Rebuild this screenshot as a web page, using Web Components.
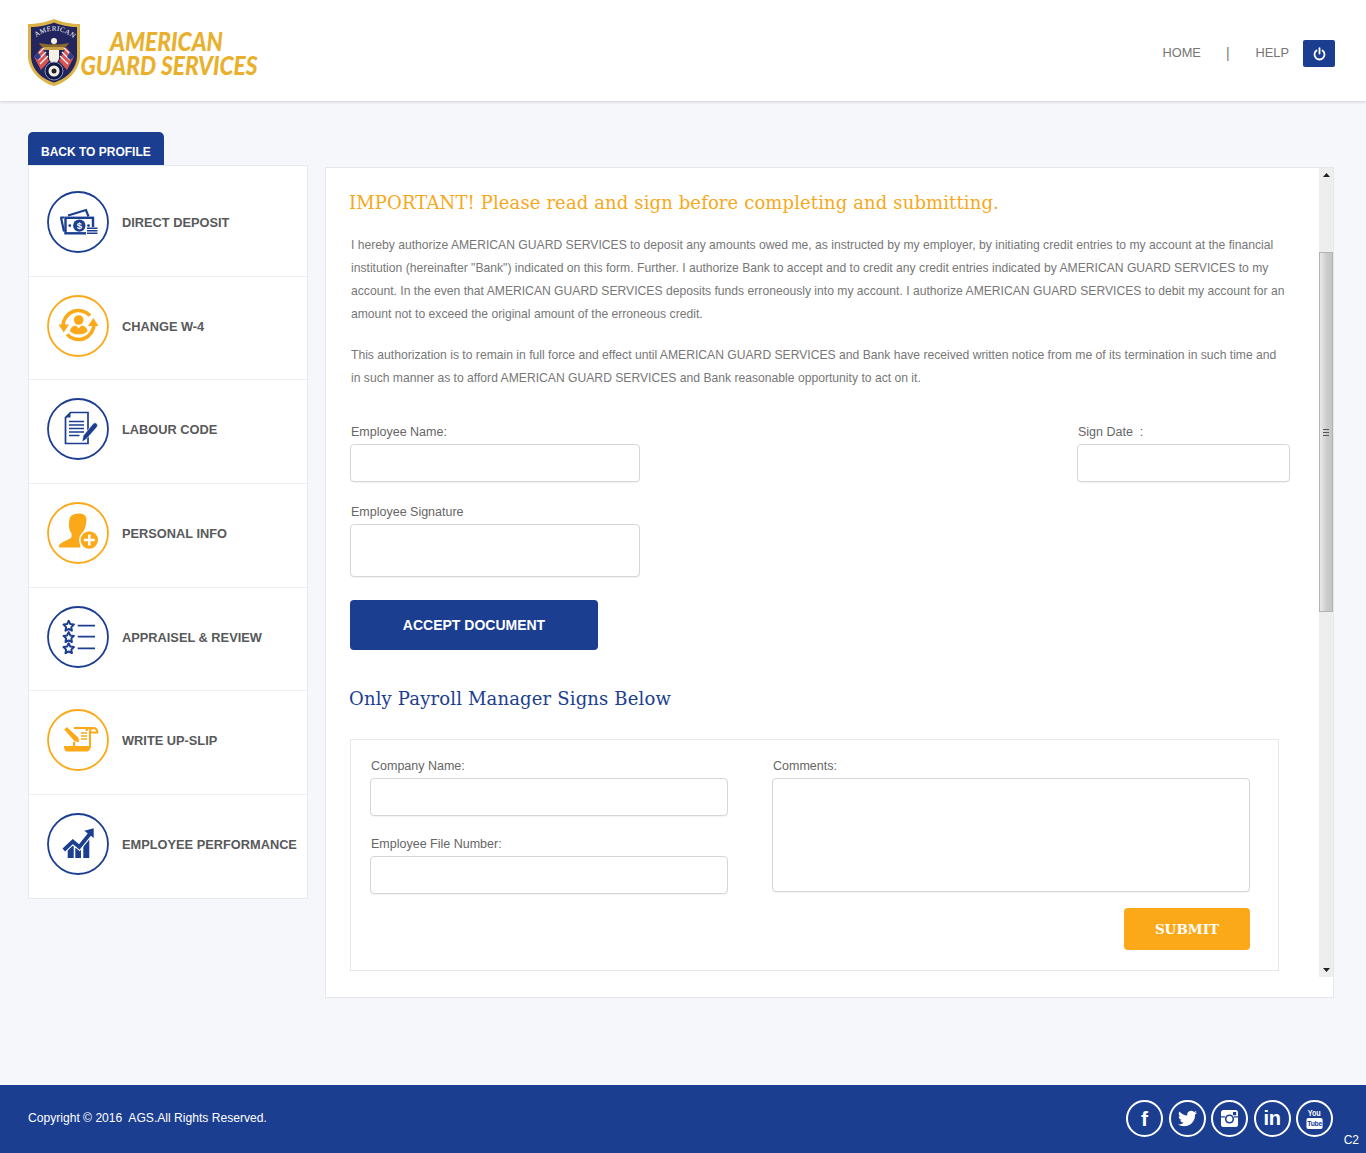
<!DOCTYPE html>
<html>
<head>
<meta charset="utf-8">
<title>American Guard Services</title>
<style>
  html, body { margin: 0; padding: 0; background: #f6f7fa; font-family: "Liberation Sans", Arial, sans-serif; }
</style>
</head>
<body>
<ags-app>
  <ags-header slot="header"></ags-header>

  <ags-tab slot="tab">BACK TO PROFILE</ags-tab>

  <ags-sidebar slot="side">
    <ags-nav-item label="DIRECT DEPOSIT" tone="blue">
      <svg viewBox="0 0 62 62" fill="none">
        <path d="M21 24.500l18-5.500 2.500 6.500" stroke="#1b3e91" stroke-width="2.200"/>
        <path d="M13.300 26.500h4M14 26.500l3 14" stroke="#1b3e91" stroke-width="2.200"/>
        <rect x="18.500" y="26.800" width="27.500" height="15.500" stroke="#1b3e91" stroke-width="2.400" fill="#fff"/>
        <circle cx="32.300" cy="34.600" r="6.200" fill="#1b3e91"/>
        <text x="32.300" y="38" font-family="Liberation Sans" font-weight="700" font-size="9.500" text-anchor="middle" fill="#fff">$</text>
        <circle cx="22.800" cy="34.600" r="1.400" fill="#1b3e91"/>
        <circle cx="41.500" cy="34.600" r="1.400" fill="#1b3e91"/>
        <rect x="39" y="36" width="12" height="8" fill="#fff"/>
        <path d="M40 37.300h10.500M40 39.800h10.500M40 42.300h10.500" stroke="#1b3e91" stroke-width="1.400"/>
      </svg>
    </ags-nav-item>
    <ags-nav-item label="CHANGE W-4" tone="orange">
      <svg viewBox="0 0 62 62" fill="none">
        <path d="M16 31a15.500 15.500 0 0 1 27-10.400" stroke="#fba919" stroke-width="3.600"/>
        <path d="M47 29a15.500 15.500 0 0 1-27 10.400" stroke="#fba919" stroke-width="3.600"/>
        <path d="M11.500 29.500h10.500l-5.200 8z" fill="#fba919"/>
        <path d="M41 31h10.500l-5.200-8z" fill="#fba919"/>
        <circle cx="31.700" cy="25" r="4.800" fill="#fba919"/>
        <path d="M23 36.500c0-4 3-5.500 6-6l2.700 3 2.700-3c3 .5 6 2 6 6-2.500 2-5 2.800-8.700 2.800S25.500 38.500 23 36.500z" fill="#fba919"/>
      </svg>
    </ags-nav-item>
    <ags-nav-item label="LABOUR CODE" tone="blue">
      <svg viewBox="0 0 62 62" fill="none">
        <path d="M23.500 14.500h17.500v31H18.500V19.500z" stroke="#1b3e91" stroke-width="1.700" fill="#fff"/>
        <path d="M23.500 14.500v5h-5z" fill="#1b3e91"/>
        <path d="M22 23.500h15M22 27h15M22 30.500h15M22 34h15M22 37.500h10.500" stroke="#1b3e91" stroke-width="1.700"/>
        <path d="M35 44l1.300-6.500 10-12c2-2 5.500 1 3.700 3.500L39.500 41z" fill="#1b3e91" stroke="#fff" stroke-width=".6"/>
      </svg>
    </ags-nav-item>
    <ags-nav-item label="PERSONAL INFO" tone="orange">
      <svg viewBox="0 0 62 62" fill="none">
        <path d="M24 14c3-3 11-3.500 14-.5 2 2 1.500 5.500 1 8.500-.6 3.500-2 7-3.500 9-.3 1.500 0 3 1.500 4-3 2.500-4.500 6.500-3.500 10.500H13.500c-2 0-2-2-1-3 2.500-2.500 8.500-4.500 11.500-6.500.8-1.500.8-3.200.4-4.800C22.500 29 21.500 25 22 21c.2-2.800.6-5.400 2-7z" fill="#fba919"/>
        <circle cx="42.300" cy="38" r="9.500" fill="#fba919" stroke="#fff" stroke-width="1.600"/>
        <path d="M42.300 32.500v11M36.800 38h11" stroke="#fff" stroke-width="2.600"/>
      </svg>
    </ags-nav-item>
    <ags-nav-item label="APPRAISEL &amp; REVIEW" tone="blue">
      <svg viewBox="0 0 62 62" fill="none">
        <path d="M21.700 14.800l1.600 3.300 3.600.5-2.600 2.500.6 3.600-3.200-1.700-3.200 1.700.6-3.600-2.600-2.500 3.600-.5z" stroke="#1b3e91" stroke-width="2" stroke-linejoin="round"/>
        <path transform="translate(0 11.300)" d="M21.700 14.800l1.600 3.300 3.600.5-2.600 2.500.6 3.600-3.200-1.700-3.200 1.700.6-3.600-2.600-2.500 3.600-.5z" stroke="#1b3e91" stroke-width="2" stroke-linejoin="round"/>
        <path transform="translate(0 22.500)" d="M21.700 14.800l1.600 3.300 3.600.5-2.600 2.500.6 3.600-3.200-1.700-3.200 1.700.6-3.600-2.600-2.500 3.600-.5z" stroke="#1b3e91" stroke-width="2" stroke-linejoin="round"/>
        <path d="M30.700 19.700H48M30.700 30.700H48M30.700 42.300H48" stroke="#1b3e91" stroke-width="1.800"/>
      </svg>
    </ags-nav-item>
    <ags-nav-item label="WRITE UP-SLIP" tone="orange">
      <svg viewBox="0 0 62 62" fill="none">
        <path d="M27 19h18.500c3 0 5 1.500 5 4.500h-7.700" stroke="#fba919" stroke-width="1.800"/>
        <path d="M43 38V23c0-2 1-4 3-4h-4c-1.500 0-2.500 1-2.500 3" stroke="#fba919" stroke-width="2"/>
        <path d="M17 37h27c0 3-2 5.600-5 5.600H20c-2 0-3-2.600-3-5.600z" fill="#fba919"/>
        <path d="M26 37v-4h2.200v4z" fill="#fba919"/>
        <path d="M34 24h6M34 27h6M34 30h6" stroke="#fba919" stroke-width="1.300"/>
        <path d="M17.300 20.500l2.500-2.500 11.500 10.500 1 4.500-4.800-.8z" fill="#fba919"/>
      </svg>
    </ags-nav-item>
    <ags-nav-item label="EMPLOYEE PERFORMANCE" tone="blue">
      <svg viewBox="0 0 62 62" fill="none">
        <path d="M20.700 45V33h6v12zM28.300 45V35h5.700v10zM36.300 45V26h6v19z" fill="#1b3e91"/>
        <path d="M16.800 37l9-8.500 6.500 5.500 10.500-13" stroke="#fff" stroke-width="6"/>
        <path d="M16.800 37l9-8.500 6.500 5.500 10.500-13" stroke="#1b3e91" stroke-width="3.800"/>
        <path d="M37.300 17.800l9.400-2.500V25z" fill="#1b3e91"/>
      </svg>
    </ags-nav-item>
  </ags-sidebar>

  <ags-panel slot="main">
    <ags-heading tone="orange">IMPORTANT! Please read and sign before completing and submitting.</ags-heading>
    <ags-copy>
      <p>I hereby authorize AMERICAN GUARD SERVICES to deposit any amounts owed me, as instructed by my employer, by initiating credit entries to my account at the financial institution (hereinafter "Bank") indicated on this form. Further. I authorize Bank to accept and to credit any credit entries indicated by AMERICAN GUARD SERVICES to my account. In the even that AMERICAN GUARD SERVICES deposits funds erroneously into my account. I authorize AMERICAN GUARD SERVICES to debit my account for an amount not to exceed the original amount of the erroneous credit.</p>
      <p>This authorization is to remain in full force and effect until AMERICAN GUARD SERVICES and Bank have received written notice from me of its termination in such time and in such manner as to afford AMERICAN GUARD SERVICES and Bank reasonable opportunity to act on it.</p>
    </ags-copy>
    <ags-sign-form></ags-sign-form>
    <ags-heading tone="blue" small>Only Payroll Manager Signs Below</ags-heading>
    <ags-manager-form></ags-manager-form>
  </ags-panel>

  <ags-footer slot="footer"></ags-footer>
</ags-app>

<script>
function el(tag, css, html) {
  customElements.define(tag, class extends HTMLElement {
    constructor() {
      super();
      this.attachShadow({ mode: "open" }).innerHTML = "<style>" + css + "</style>" + html;
    }
  });
}

el("ags-app", `
  :host { display: flex; flex-direction: column; min-height: 1153px; }
  .body { flex: 1; display: grid; grid-template-columns: 281px 1009px; column-gap: 16px; padding: 31px 0 0 28px; align-content: start; }
  .tabrow { grid-column: 1 / 3; height: 33px; }
  .main { padding-top: 2px; }
`, `
  <slot name="header"></slot>
  <div class="body">
    <div class="tabrow"><slot name="tab"></slot></div>
    <div class="side"><slot name="side"></slot></div>
    <div class="main"><slot name="main"></slot></div>
  </div>
  <slot name="footer"></slot>
`);

el("ags-header", `
  :host { display: flex; height: 101px; box-sizing: border-box; background: #fff; box-shadow: 0 1px 3px rgba(0,0,0,.16); justify-content: space-between; align-items: center; padding: 0 31px 0 27px; position: relative; }
  .logo { display: block; margin-top: 7px; }
  nav { display: flex; align-items: center; font-size: 12.800px; color: #777; margin-top: 6px; }
  nav span:not(.pw) { margin-bottom: 2px; }
  .sep { margin-left: 25px; margin-right: 26px; font-size: 14px; }
  .pw { width: 32px; height: 27px; margin-left: 14px; background: #1b3e91; border-radius: 2px; display: flex; align-items: center; justify-content: center; }
`, `
  <svg class="logo" width="232" height="70" viewBox="0 0 232 70">
    <path d="M1 5c8 0 19-2 26-5 7 3 18 5 26 5v32c0 14-12 26-26 30C13 63 1 51 1 37z" fill="#dcb347"/>
    <path d="M4 8c8 0 17-2 23-4.500C33 6 42 8 50 8v29c0 12-10 23-23 26.500C14 60 4 49 4 37z" fill="#23265e"/>
    <path id="arc" d="M7 20C19 9 35 9 47 20" fill="none"/>
    <text font-family="Liberation Serif" font-size="7" fill="#fff" letter-spacing=".4"><textPath href="#arc" startOffset="3">AMERICAN</textPath></text>
    <path d="M12 24c6 1 11 2 15 1 4 1 9 0 15-1-2 4-6 6-11 7h-8c-5-1-9-3-11-7z" fill="#8a6a2a"/>
    <circle cx="27" cy="22" r="3" fill="#f4f1e6"/>
    <path d="M17 28h20v3H17z" fill="#c9a24a"/>
    <path d="M22 31h10v8c0 3-3 5-5 6-2-1-5-3-5-6z" fill="#f4f1e6"/>
    <path d="M7 38l8-10 7 14-8 9z" fill="#d9534f"/>
    <path d="M9 37l8-8M11 41l8-8M13 45l8-8" stroke="#fff" stroke-width="1.200"/>
    <path d="M7 38l4-5 3 5-3 3z" fill="#2f3f8f"/>
    <path d="M47 38l-8-10-7 14 8 9z" fill="#d9534f"/>
    <path d="M45 37l-8-8M43 41l-8-8M41 45l-8-8" stroke="#fff" stroke-width="1.200"/>
    <path d="M47 38l-4-5-3 5 3 3z" fill="#2f3f8f"/>
    <circle cx="27" cy="52" r="9" fill="#101a44" stroke="#8b93b8" stroke-width="1"/>
    <circle cx="27" cy="52" r="5.500" fill="#f4f1e6"/>
    <circle cx="27" cy="52" r="2.500" fill="#222"/>
    <text transform="translate(139.500 32) scale(.875 1)" font-family="Lato" font-weight="900" font-style="italic" font-size="26" fill="#e9b02d" text-anchor="middle">AMERICAN</text>
    <text transform="translate(142 56) scale(.875 1)" font-family="Lato" font-weight="900" font-style="italic" font-size="26" fill="#e9b02d" text-anchor="middle">GUARD SERVICES</text>
  </svg>
  <nav>
    <span>HOME</span><span class="sep">|</span><span>HELP</span>
    <span class="pw">
      <svg width="13" height="14" viewBox="0 0 13 14" fill="none" stroke="#fff" stroke-width="1.800" stroke-linecap="round">
        <path d="M6.500 1.200v5.300"/><path d="M3.500 3.500a5 5 0 1 0 6 0"/>
      </svg>
    </span>
  </nav>
`);

el("ags-tab", `
  :host { display: inline-block; background: #1b3e91; color: #fff; font-size: 12px; font-weight: 700; height: 34px; line-height: 41px; padding: 0 13px; border-radius: 5px 5px 0 0; box-sizing: border-box; width: 136px; white-space: nowrap; overflow: hidden; }
`, `<slot></slot>`);

el("ags-sidebar", `
  :host { display: block; position: relative; background: #fff; border: 1px solid #e8e9ec; padding-top: 7px; width: 280px; box-sizing: border-box; height: 734px; }
`, `<slot></slot>`);

customElements.define("ags-nav-item", class extends HTMLElement {
  constructor() {
    super();
    var tone = this.getAttribute("tone") == "orange" ? "#fba919" : "#1b3e91";
    this.attachShadow({ mode: "open" }).innerHTML = `
      <style>
        :host { display: flex; align-items: flex-start; height: 103.700px; box-sizing: border-box; border-bottom: 1px solid #eeeff1; padding: 18px 0 0 18px; }
        :host(:last-child) { border-bottom: 0; }
        .ring { width: 62px; height: 62px; position: relative; flex: none; }
        .ring svg.o { position: absolute; inset: 0; }
        ::slotted(svg) { position: absolute; inset: 0; width: 62px; height: 62px; }
        .txt { margin: 0 0 0 13px; height: 62px; line-height: 64px; font-size: 12.800px; font-weight: 700; color: #58595b; white-space: nowrap; }
      </style>
      <div class="ring">
        <svg class="o" width="62" height="62" viewBox="0 0 62 62"><circle cx="31" cy="31" r="30" fill="none" stroke="${tone}" stroke-width="1.800"/></svg>
        <slot></slot>
      </div>
      <div class="txt">${this.getAttribute("label").replace("&", "&amp;")}</div>`;
  }
});

el("ags-panel", `
  :host { display: flex; box-sizing: border-box; width: 1009px; height: 831px; background: #fff; border: 1px solid #e6e7ea; padding-bottom: 20px; }
  .content { flex: 1; min-width: 0; padding: 22px 40px 0 23px; }
`, `
  <div class="content"><slot></slot></div>
  <ags-scrollbar></ags-scrollbar>
`);

el("ags-scrollbar", `
  :host { display: flex; flex-direction: column; flex: none; width: 14px; background: #eeeeef; position: relative; }
  .arrow { height: 14px; display: flex; align-items: center; justify-content: center; }
  .thumb { position: absolute; left: 0; right: 0; top: 84px; height: 360px; box-sizing: border-box; border: 1px solid #b2b2b2; background: linear-gradient(90deg, #e9e9ea, #cbcbcc 60%, #c4c4c5); display: flex; align-items: center; justify-content: center; }
  .grip { width: 6px; height: 5px; border-top: 1px solid #555; border-bottom: 1px solid #555; position: relative; }
  .grip::after { content: ""; position: absolute; left: 0; right: 0; top: 2px; height: 1px; background: #555; }
  .sp { flex: 1; }
`, `
  <div class="arrow"><svg width="7" height="4" viewBox="0 0 7 4"><path d="M3.500 0L7 4H0z" fill="#222"/></svg></div>
  <div class="sp"></div>
  <div class="thumb"><div class="grip"></div></div>
  <div class="arrow"><svg width="7" height="4" viewBox="0 0 7 4"><path d="M3.500 4L7 0H0z" fill="#222"/></svg></div>
`);

el("ags-heading", `
  :host { display: block; font-family: "DejaVu Serif", "Liberation Serif", serif; font-size: 18px; letter-spacing: .12px; line-height: 26px; color: #f7a81b; white-space: nowrap; }
  :host([tone="blue"]) { color: #1b3e91; margin-top: 36px; letter-spacing: .16px; }
`, `<slot></slot>`);

el("ags-copy", `
  :host { display: block; margin: 18px 0 0 2px; width: 935px; font-size: 12.150px; line-height: 23px; color: #777; }
  ::slotted(p) { margin: 0 0 18px; }
`, `<slot></slot>`);

el("ags-field", `
  :host { display: block; }
  label { display: block; font-size: 12.500px; line-height: 18px; color: #666; padding-left: 1px; margin-bottom: 3px; white-space: pre; }
  .box { display: block; box-sizing: border-box; width: 100%; height: var(--h, 38px); background: #fff; border: 1px solid #d5d6d8; border-radius: 4px; box-shadow: 0 1px 1px rgba(0,0,0,.05); }
`, `<label><slot></slot></label><div class="box"></div>`);

el("ags-sign-form", `
  :host { display: block; margin: 33px 0 0 1px; position: relative; }
  .row { display: flex; justify-content: space-between; width: 940px; }
  ags-field.a { width: 290px; }
  ags-field.b { width: 213px; }
  .sig { margin-top: 21px; --h: 53px; }
  button { display: block; margin-top: 23px; width: 248px; height: 50px; border: 0; border-radius: 4px; background: #1b3e91; color: #fff; font: 700 14px "Liberation Sans", Arial, sans-serif; padding: 0; }
`, `
  <div class="row"><ags-field class="a">Employee Name:</ags-field><ags-field class="b">Sign Date  :</ags-field></div>
  <ags-field class="a sig">Employee Signature</ags-field>
  <button>ACCEPT DOCUMENT</button>
`);

el("ags-manager-form", `
  :host { display: block; box-sizing: border-box; margin: 27px 0 0 1px; width: 929px; height: 232px; border: 1px solid #e6e7ea; padding: 17px 28px 0 19px; }
  .cols { display: grid; grid-template-columns: 358px 478px; column-gap: 44px; }
  .stack { display: flex; flex-direction: column; gap: 19px; }
  .big { --h: 114px; }
  .foot { display: flex; justify-content: flex-end; margin-top: 14px; }
  button { width: 126px; height: 42px; border: 0; border-radius: 4px; background: #fba919; color: #fff; font: 700 13.500px "DejaVu Serif", "Liberation Serif", serif; padding: 0; }
`, `
  <div class="cols">
    <div class="stack"><ags-field>Company Name:</ags-field><ags-field>Employee File Number:</ags-field></div>
    <ags-field class="big">Comments:</ags-field>
  </div>
  <div class="foot"><button>SUBMIT</button></div>
`);

el("ags-footer", `
  :host { display: flex; height: 68px; box-sizing: border-box; background: #1b3e91; color: #fff; align-items: center; justify-content: space-between; padding: 0 33px 1px 28px; font-size: 12.100px; position: relative; }
  .copy { white-space: pre; margin-bottom: 1px; }
  .social { display: flex; gap: 5.500px; }
  .c { width: 37px; height: 37px; box-sizing: border-box; border: 2px solid #fff; border-radius: 50%; display: flex; align-items: center; justify-content: center; font-weight: 700; }
  .f { font-size: 21px; }
  .in { font-size: 20px; letter-spacing: -.5px; }
  .yt { flex-direction: column; line-height: 1; gap: 0; }
  .yt b { font: 700 9px "Liberation Sans", sans-serif; transform: scaleX(.8); }
  .yt i { font: 700 8px "Liberation Sans", sans-serif; background: #fff; color: #1b3e91; padding: 1px 1px; border-radius: 2px; margin-top: 0; letter-spacing: -.3px; transform: scaleX(.85); }
  .tag { position: absolute; right: 7px; bottom: 6px; font-size: 12px; line-height: 14px; }
`, `
  <div class="copy">Copyright © 2016  AGS.All Rights Reserved.</div>
  <div class="social">
    <span class="c f">f</span>
    <span class="c"><svg width="19" height="19" viewBox="0 0 24 24" fill="#fff"><path d="M23.953 4.57a10 10 0 01-2.825.775 4.958 4.958 0 002.163-2.723c-.951.555-2.005.959-3.127 1.184a4.920 4.920 0 00-8.384 4.482C7.690 8.095 4.067 6.130 1.640 3.162a4.822 4.822 0 00-.666 2.475c0 1.710.870 3.213 2.188 4.096a4.904 4.904 0 01-2.228-.616v.060a4.923 4.923 0 003.946 4.827 4.996 4.996 0 01-2.212.085 4.936 4.936 0 004.604 3.417 9.867 9.867 0 01-6.102 2.105c-.390 0-.779-.023-1.170-.067a13.995 13.995 0 007.557 2.209c9.053 0 13.998-7.496 13.998-13.985 0-.210 0-.420-.015-.630A9.935 9.935 0 0024 4.590z"/></svg></span>
    <span class="c"><svg width="17" height="17" viewBox="0 0 17 17"><rect width="17" height="17" rx="2.500" fill="#fff"/><circle cx="8.500" cy="9" r="4.600" fill="#1b3e91"/><circle cx="8.500" cy="9" r="3" fill="#fff"/><rect x="12" y="2" width="3.200" height="3.200" fill="#1b3e91"/><rect x="0" y="6.300" width="4" height="1.200" fill="#1b3e91"/><rect x="13" y="6.300" width="4" height="1.200" fill="#1b3e91"/></svg></span>
    <span class="c in">in</span>
    <span class="c yt"><b>You</b><i>Tube</i></span>
  </div>
  <div class="tag">C2</div>
`);
</script>
</body>
</html>
